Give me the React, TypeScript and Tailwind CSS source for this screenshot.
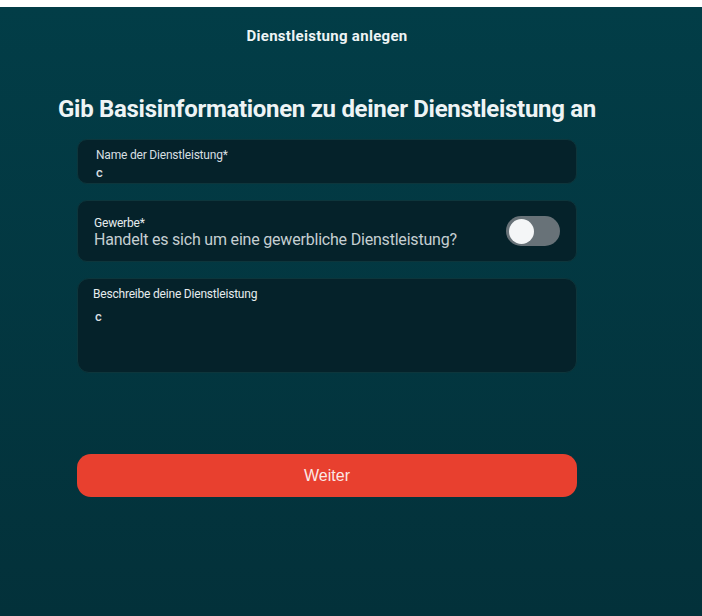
export default function App() {
  return (
    <div className="min-h-screen w-full bg-white pt-[7px]" style={{ fontFamily: "Roboto, 'Noto Sans', sans-serif" }}>
      <div className="h-[609px] w-full bg-gradient-to-b from-[#023d47] to-[#03313a]">
        <div className="flex w-[654px] flex-col items-center">
          <h2 className="mt-[19px] text-[15px] font-bold leading-[20px] tracking-[0.3px] text-[#eef4f5]">
            Dienstleistung anlegen
          </h2>
          <h1 className="mt-[48px] text-[24px] font-bold leading-[30px] tracking-[-0.3px] text-[#eef4f5]">
            Gib Basisinformationen zu deiner Dienstleistung an
          </h1>

          <div className="mt-[15px] flex w-[500px] flex-col">
            {/* Name */}
            <div className="h-[45px] rounded-[10px] border border-[#0d363c] bg-[#05222a] pl-[18px] pt-[8px]">
              <p className="text-[12px] leading-[14px] tracking-[-0.2px] text-[#d7dfe1]">Name der Dienstleistung*</p>
              <p className="mt-[3px] text-[13px] font-medium leading-[16px] text-[#d7dfe1]">c</p>
            </div>

            {/* Gewerbe */}
            <div className="mt-[16px] flex h-[62px] items-center justify-between rounded-[10px] border border-[#0d363c] bg-[#05222a] pl-[16px] pr-[16px]">
              <div className="pt-[3px]">
                <p className="text-[12px] leading-[14px] tracking-[-0.2px] text-[#e6ecee]">Gewerbe*</p>
                <p className="text-[16px] leading-[20px] tracking-[-0.2px] text-[#c5cfd2]">
                  Handelt es sich um eine gewerbliche Dienstleistung?
                </p>
              </div>
              <div className="flex h-[30px] w-[54px] items-center rounded-full bg-[#687278] px-[3px]">
                <div className="h-[25px] w-[25px] rounded-full bg-[#f4f6f7]" />
              </div>
            </div>

            {/* Beschreibung */}
            <div className="mt-[16px] h-[95px] rounded-[12px] border border-[#0d363c] bg-[#05222a] pl-[15px] pt-[8px]">
              <p className="text-[12px] leading-[14px] tracking-[-0.2px] text-[#e6ecee]">Beschreibe deine Dienstleistung</p>
              <p className="ml-[2px] mt-[8px] text-[13px] font-medium leading-[16px] text-[#d7dfe1]">c</p>
            </div>

            <button
              className="mt-[81px] h-[43px] w-full rounded-[14px] bg-[#e8402f] text-[16px] text-[#fbe9e6]"
              style={{ fontFamily: "'Liberation Sans', Arial, sans-serif" }}
            >
              Weiter
            </button>
          </div>
        </div>
      </div>
    </div>
  );
}
